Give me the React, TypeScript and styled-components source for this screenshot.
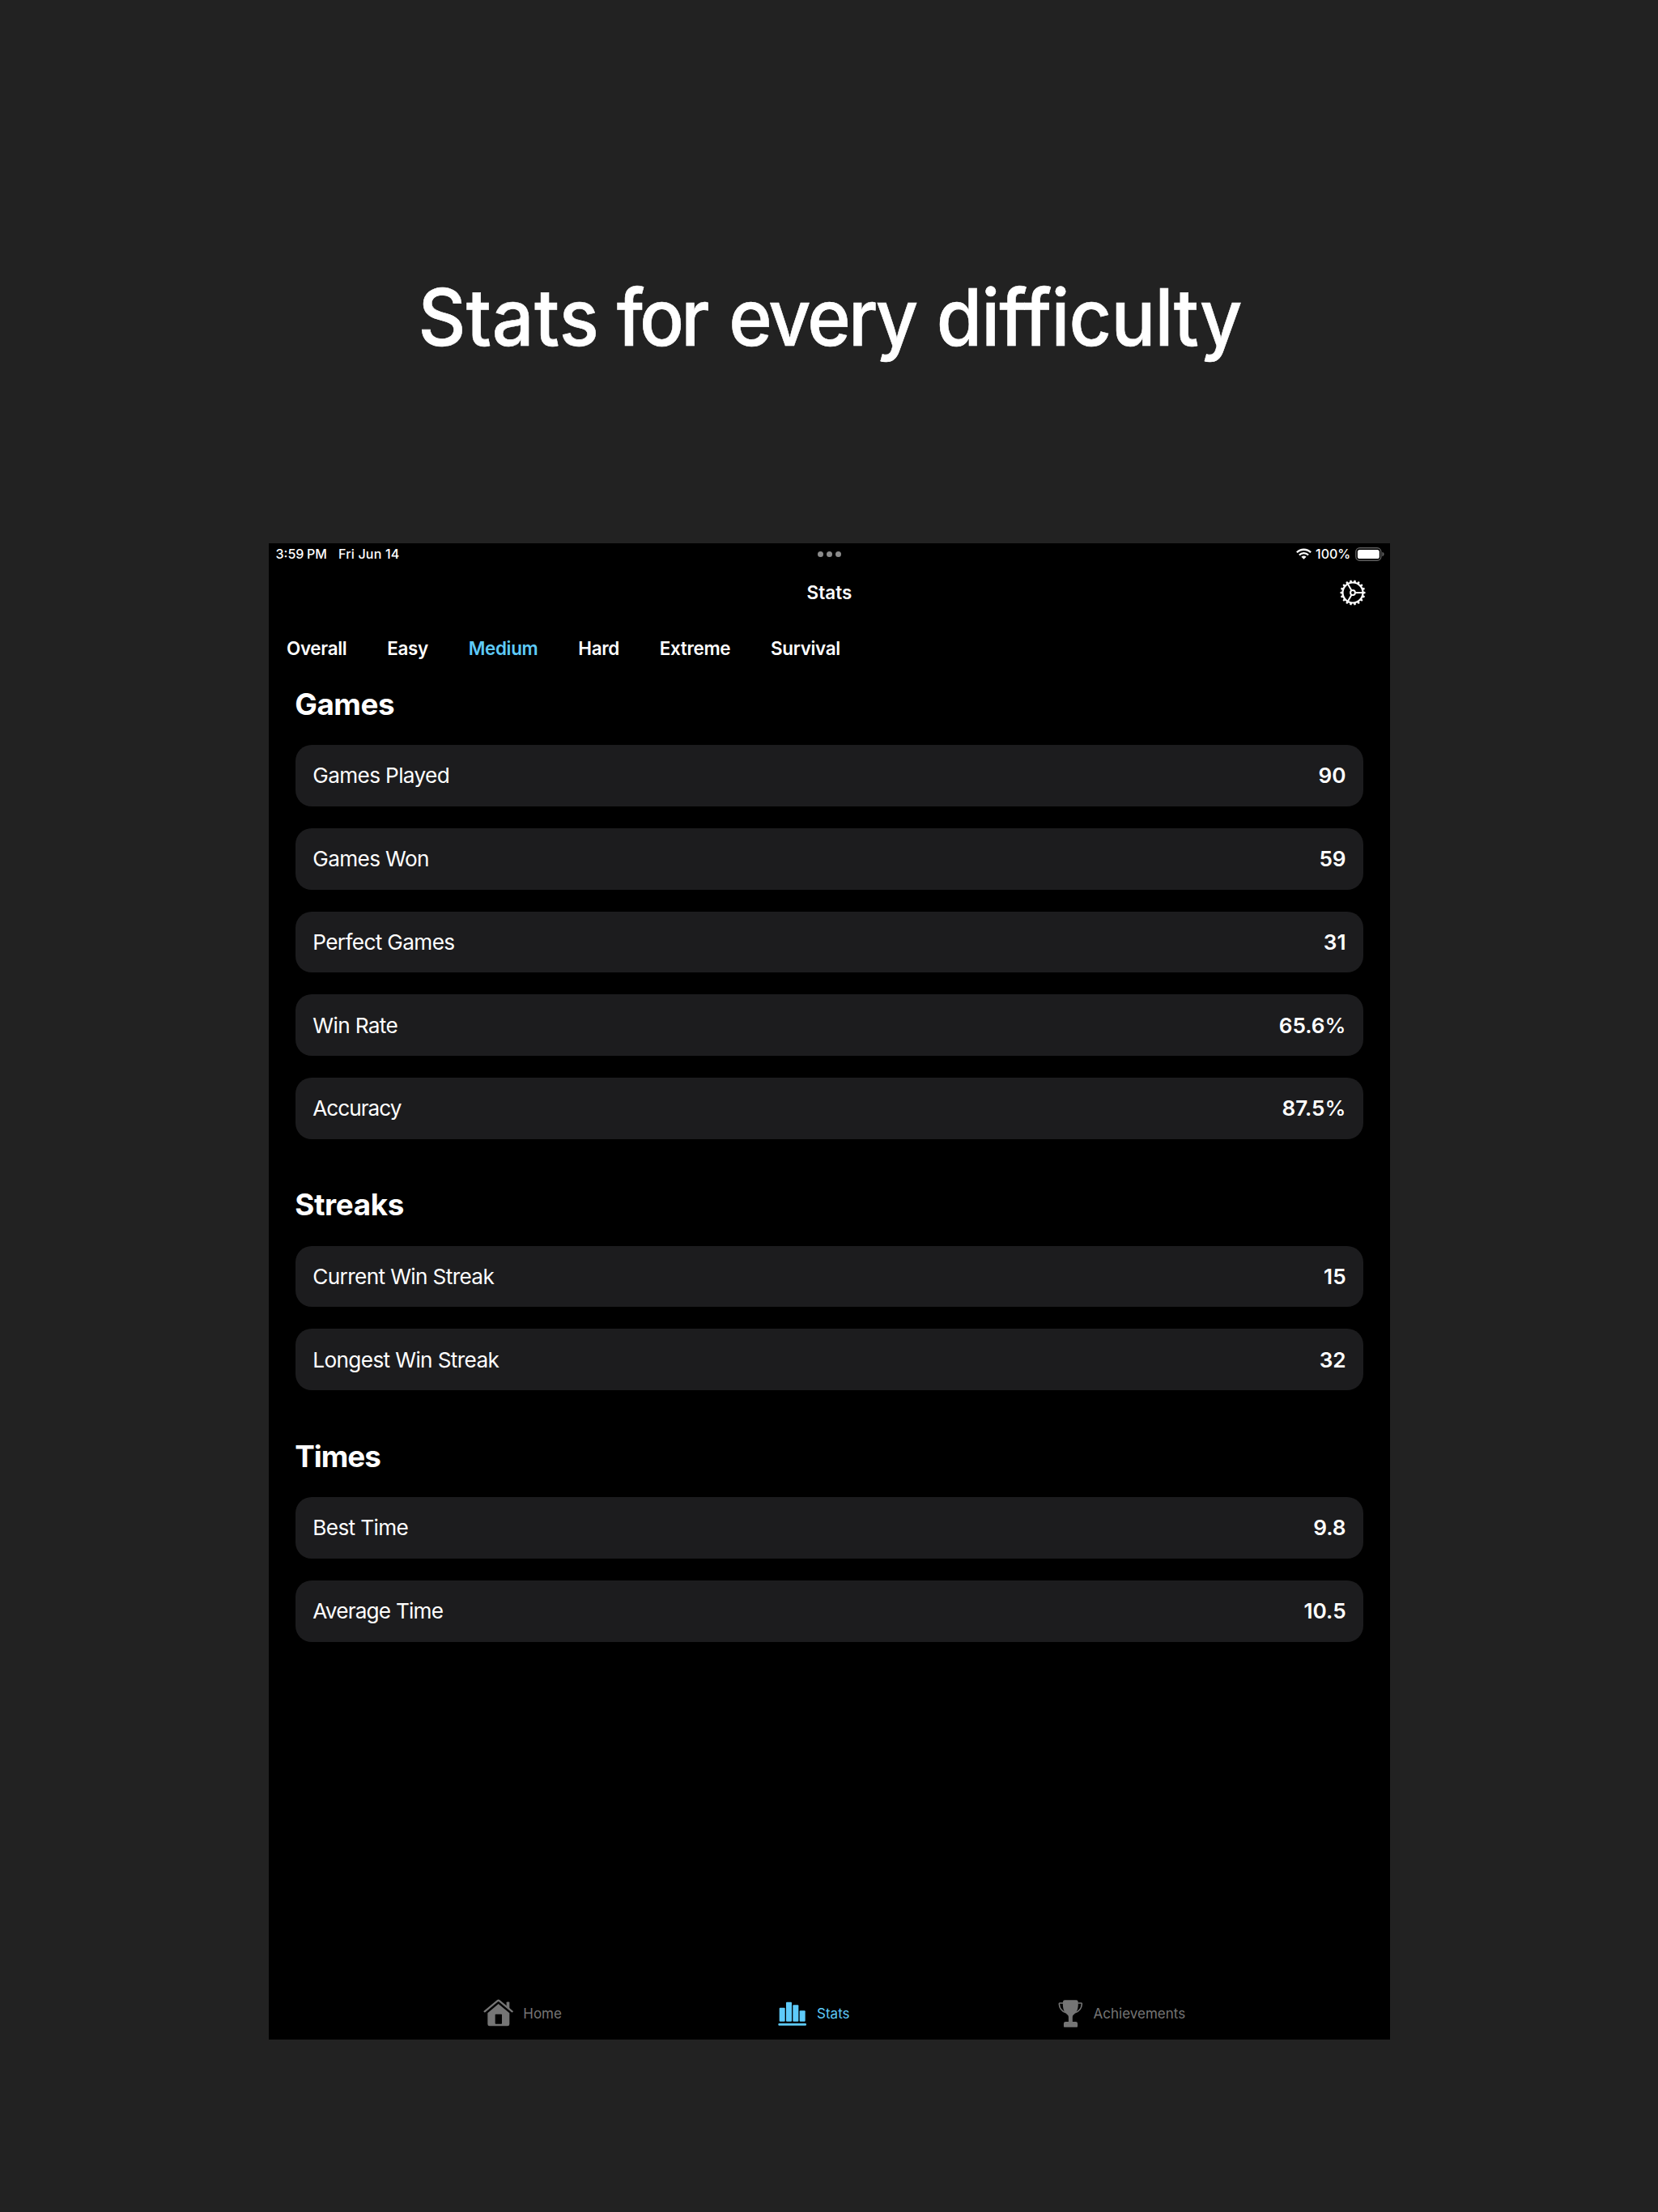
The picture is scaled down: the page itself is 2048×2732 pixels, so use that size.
import React, { Fragment } from "react";
import styled, { createGlobalStyle } from "styled-components";

const ACCENT = "#5ecbfa";
const MUTED = "#757575";

const GlobalStyle = createGlobalStyle`
  *, *::before, *::after { box-sizing: border-box; }
  html, body { margin: 0; padding: 0; background: #222222; }
  body {
    font-family: Inter, "Liberation Sans", sans-serif;
    color: #ffffff;
    -webkit-font-smoothing: antialiased;
  }
`;

const Page = styled.div`
  width: 2048px;
  height: 2732px;
  display: flex;
  flex-direction: column;
  background: #222222;
  overflow: hidden;
`;

const Hero = styled.header`
  flex: none;
  height: 671px;
  padding: 332px 0 0 2px;
  text-align: center;
`;

const Headline = styled.h1`
  margin: 0;
  font-size: 97px;
  line-height: 120px;
  font-weight: 500;
  white-space: nowrap;
  -webkit-text-stroke: 0.6px #ffffff;
  transform: scaleX(0.94);
`;

const Word = styled.span<{ $tracking: number; $gap: number }>`
  letter-spacing: ${(p) => p.$tracking}px;
  margin-right: ${(p) => p.$gap}px;
`;

const Screen = styled.main`
  flex: none;
  display: flex;
  flex-direction: column;
  width: 1385px;
  height: 1847.5px;
  margin-left: 332px;
  background: #000000;
`;

const StatusBar = styled.div`
  flex: none;
  display: grid;
  grid-template-columns: 1fr auto 1fr;
  align-items: center;
  height: 27px;
  padding: 0 6.8px 1px 8.5px;
  font-size: 16px;
  line-height: 20px;
  font-weight: 500;
  white-space: nowrap;
`;

const Clock = styled.div`
  display: flex;
  gap: 3.6px;
`;

const CalendarDate = styled.span`
  margin-left: 10.5px;
  letter-spacing: 0.2px;
`;

const Multitask = styled.div`
  display: flex;
  gap: 4px;
  padding: 1px 1px 0 0;
`;

const Dot = styled.i`
  width: 7px;
  height: 7px;
  border-radius: 50%;
  background: #8b8b8b;
`;

const Indicators = styled.div`
  display: flex;
  justify-content: flex-end;
  align-items: center;
`;

const BatteryLevel = styled.span`
  margin: 0 6px 0 5.5px;
`;

const NavBar = styled.div`
  flex: none;
  display: grid;
  grid-template-columns: 1fr auto 1fr;
  align-items: center;
  height: 68px;
  padding: 0 30px;
`;

const NavTitle = styled.h2`
  grid-column: 2;
  margin: 0;
  font-size: 22.4px;
  line-height: 28px;
  font-weight: 600;
  letter-spacing: 0.1px;
`;

const SettingsButton = styled.button`
  justify-self: end;
  display: flex;
  padding: 0;
  border: 0;
  background: none;
  color: inherit;
`;

const Filters = styled.nav`
  flex: none;
  display: flex;
  align-items: center;
  gap: 49.8px;
  height: 69.7px;
  padding-left: 22px;
`;

const Filter = styled.span<{ $active: boolean }>`
  font-size: 22.4px;
  line-height: 28px;
  font-weight: 600;
  letter-spacing: -0.3px;
  color: ${(p) => (p.$active ? ACCENT : "#ffffff")};
`;

const Content = styled.div`
  display: flex;
  flex-direction: column;
  gap: 58.6px;
  padding: 11px 32.8px 0 32.7px;
`;

const Section = styled.section`
  display: flex;
  flex-direction: column;
`;

const SectionTitle = styled.h3<{ $tracking: number }>`
  margin: 0 0 27.4px -0.5px;
  font-size: 36.8px;
  line-height: 46px;
  font-weight: 700;
  letter-spacing: ${(p) => p.$tracking}px;
`;

const Rows = styled.div`
  display: flex;
  flex-direction: column;
  gap: 27.05px;
`;

const Row = styled.div`
  display: flex;
  align-items: center;
  justify-content: space-between;
  height: 75.7px;
  padding: 0.8px 21.6px 0;
  border-radius: 20px;
  background: #1c1c1e;
  font-size: 26.2px;
  line-height: 34px;
`;

const Label = styled.span<{ $tracking: number }>`
  letter-spacing: ${(p) => p.$tracking}px;
`;

const Value = styled.span`
  font-weight: 600;
`;

const Unit = styled.span`
  font-weight: 500;
`;

const TabBar = styled.nav`
  display: flex;
  align-items: center;
  gap: 257.6px;
  height: 64px;
  margin-top: auto;
  padding-left: 264.5px;
`;

const Tab = styled.span<{ $active?: boolean }>`
  display: flex;
  align-items: center;
  gap: 12.5px;
  font-size: 17px;
  line-height: 22px;
  color: ${(p) => (p.$active ? ACCENT : MUTED)};
`;

const TabIcon = styled.span<{ $width: number }>`
  display: flex;
  justify-content: flex-end;
  width: ${(p) => p.$width}px;
`;

const WifiIcon = () => (
  <svg width="19" height="14" viewBox="0 0 19 14" fill="none" stroke="#fff" strokeWidth="2.3">
    <path d="M0.9 5.3a12.2 12.2 0 0 1 17.2 0" />
    <path d="M3.9 8.5a7.9 7.9 0 0 1 11.2 0" />
    <path d="M9.5 13.8 6.4 10.8a4.4 4.4 0 0 1 6.2 0Z" fill="#fff" stroke="none" />
  </svg>
);

const BatteryIcon = () => (
  <svg width="36" height="17" viewBox="0 0 36 17">
    <rect x="0.8" y="0.8" width="31" height="15.4" rx="4.6" fill="none" stroke="#5f5f5f" strokeWidth="1.4" />
    <rect x="2.9" y="2.9" width="26.9" height="11.2" rx="2.6" fill="#fff" />
    <path d="M33.4 5.8c1.5.5 2.2 1.5 2.2 2.7s-.7 2.2-2.2 2.7Z" fill="#5f5f5f" />
  </svg>
);

const TEETH = Array.from({ length: 18 }, (_, i) => i * 20);

const GearIcon = () => (
  <svg width="32" height="32" viewBox="-16 -16 32 32" fill="none" stroke="currentColor">
    <circle r="12.5" strokeWidth="2.2" />
    <circle r="2.9" strokeWidth="2" />
    {[0, 120, 240].map((a) => (
      <path key={a} d="M3.4 0H12" strokeWidth="2" transform={`rotate(${a})`} />
    ))}
    {TEETH.map((a) => (
      <path key={a} d="M13-1.6 15.5-1V1L13 1.6Z" fill="currentColor" stroke="none" transform={`rotate(${a})`} />
    ))}
  </svg>
);

const HomeIcon = () => (
  <svg width="37.33" height="34.67" viewBox="50 56 112 104" fill="currentColor">
    <path d="M55 102 103 62.5Q106 60 109 62.5L157 102" fill="none" stroke="currentColor" strokeWidth="7" strokeLinecap="round" />
    <path d="M136 68.500q0-2 2-2h7q2 0 2 2V95L136 86Z" />
    <path
      fillRule="evenodd"
      d="M106 74 147 107.500V149q0 7-7 7H73q-7 0-7-7V107.500ZM96 112q-2 0-2 2v32q0 2 2 2h21q2 0 2-2V114q0-2-2-2Z"
    />
  </svg>
);

const StatsIcon = () => (
  <svg width="35.33" height="32" viewBox="64 61 106 96" fill="currentColor">
    <rect x="69" y="87" width="21" height="51" rx="3" />
    <rect x="94" y="66" width="21" height="72" rx="3" />
    <rect x="119" y="77" width="21" height="61" rx="3" />
    <rect x="144" y="98" width="21" height="40" rx="3" />
    <rect x="65" y="145" width="104" height="8" rx="3.500" />
  </svg>
);

const TrophyIcon = () => (
  <svg width="31.33" height="36" viewBox="52 54 94 108" fill="currentColor">
    <path d="M77 57h43q6 0 7 6c1 18-1 33-10 43-7 7-11 8-11 15v17h12q7 0 7 7v11q0 3-3 3H76q-3 0-3-3v-11q0-7 7-7h11V121c0-7-4-8-11-15-9-10-11-25-10-43q1-6 7-6Z" />
    <path
      d="M72 68.500H58q-2 0-2 3C57 87 65 99 81 104M126 68.500h13q2 0 2 3C140 87 132 99 116 104"
      fill="none"
      stroke="currentColor"
      strokeWidth="5"
    />
  </svg>
);

const HEADLINE = [
  { text: "Stats", tracking: 0.5, gap: -3.2 },
  { text: "for", tracking: -4, gap: 3.4 },
  { text: "every", tracking: -3, gap: 1 },
  { text: "difficulty", tracking: -0.9, gap: 0 },
];

const FILTERS = ["Overall", "Easy", "Medium", "Hard", "Extreme", "Survival"];

type Stat = { label: string; value: string; unit?: string; tracking?: number };

const SECTIONS: { title: string; tracking: number; stats: Stat[] }[] = [
  {
    title: "Games",
    tracking: -0.4,
    stats: [
      { label: "Games Played", value: "90" },
      { label: "Games Won", value: "59" },
      { label: "Perfect Games", value: "31" },
      { label: "Win Rate", value: "65.6", unit: "%" },
      { label: "Accuracy", value: "87.5", unit: "%", tracking: -1 },
    ],
  },
  {
    title: "Streaks",
    tracking: -0.35,
    stats: [
      { label: "Current Win Streak", value: "15" },
      { label: "Longest Win Streak", value: "32" },
    ],
  },
  {
    title: "Times",
    tracking: -1,
    stats: [
      { label: "Best Time", value: "9.8", tracking: -0.65 },
      { label: "Average Time", value: "10.5", tracking: -0.8 },
    ],
  },
];

export default function App() {
  return (
    <Page>
      <GlobalStyle />
      <Hero>
        <Headline>
          {HEADLINE.map((word, i) => (
            <Fragment key={word.text}>
              {i > 0 && " "}
              <Word $tracking={word.tracking} $gap={word.gap}>
                {word.text}
              </Word>
            </Fragment>
          ))}
        </Headline>
      </Hero>
      <Screen>
        <StatusBar>
          <Clock>
            <span>3:59</span>
            <span>PM</span>
            <CalendarDate>Fri Jun 14</CalendarDate>
          </Clock>
          <Multitask>
            <Dot />
            <Dot />
            <Dot />
          </Multitask>
          <Indicators>
            <WifiIcon />
            <BatteryLevel>100%</BatteryLevel>
            <BatteryIcon />
          </Indicators>
        </StatusBar>
        <NavBar>
          <NavTitle>Stats</NavTitle>
          <SettingsButton aria-label="Settings">
            <GearIcon />
          </SettingsButton>
        </NavBar>
        <Filters>
          {FILTERS.map((name) => (
            <Filter key={name} $active={name === "Medium"}>
              {name}
            </Filter>
          ))}
        </Filters>
        <Content>
          {SECTIONS.map((section) => (
            <Section key={section.title}>
              <SectionTitle $tracking={section.tracking}>{section.title}</SectionTitle>
              <Rows>
                {section.stats.map((stat) => (
                  <Row key={stat.label}>
                    <Label $tracking={stat.tracking ?? -0.64}>{stat.label}</Label>
                    <Value>
                      {stat.value}
                      {stat.unit && <Unit>{stat.unit}</Unit>}
                    </Value>
                  </Row>
                ))}
              </Rows>
            </Section>
          ))}
        </Content>
        <TabBar>
          <Tab>
            <TabIcon $width={37.3}>
              <HomeIcon />
            </TabIcon>
            Home
          </Tab>
          <Tab $active>
            <TabIcon $width={45}>
              <StatsIcon />
            </TabIcon>
            Stats
          </Tab>
          <Tab>
            <TabIcon $width={31}>
              <TrophyIcon />
            </TabIcon>
            Achievements
          </Tab>
        </TabBar>
      </Screen>
    </Page>
  );
}
